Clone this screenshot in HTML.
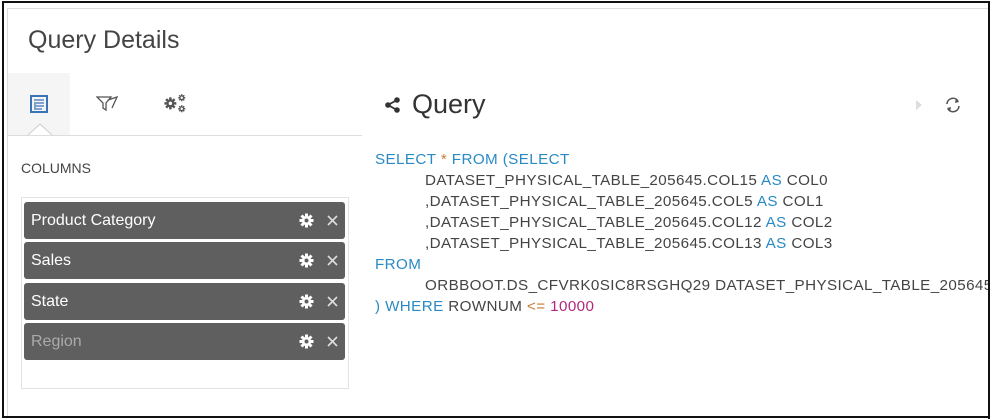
<!DOCTYPE html>
<html><head><meta charset="utf-8"><style>
*{margin:0;padding:0;box-sizing:border-box}
body{width:993px;height:420px;background:#fff;font-family:"Liberation Sans",sans-serif;position:relative;overflow:hidden}
.abs{position:absolute}
.pill{position:absolute;left:24px;width:321px;height:37px;background:#5f5f5f;border-radius:3px;color:#fff;font-size:16px;line-height:37px;padding-left:7px}
.pill svg.g{position:absolute;left:275px;top:11px}
.pill svg.x{position:absolute;left:303px;top:13px}
.sql{position:absolute;left:375px;top:148px;font-size:15.2px;letter-spacing:0.4px;line-height:21px;color:#444;white-space:pre}
.in{padding-left:50px}
.k{color:#2a8ac4}.o{color:#c0803a}.n{color:#b0287a}
</style></head><body>
<svg width="0" height="0" style="position:absolute"><defs>
<g id="gear"><circle cx="7.5" cy="7.5" r="4.6" fill="#fff"/><g stroke="#fff" stroke-width="3"><path d="M7.5 0.5v14M0.5 7.5h14M2.5 2.5l10 10M12.5 2.5l-10 10"/></g><circle cx="7.5" cy="7.5" r="2" fill="#5f5f5f"/></g>
</defs></svg>
<div class="abs" style="left:2px;top:1px;width:989px;height:417px;border:2px solid #111"></div>
<div class="abs" style="left:8px;top:8px;width:981px;height:1px;background:#ddd"></div>
<div class="abs" style="left:7px;top:8px;width:1px;height:408px;background:#ddd"></div>
<div class="abs" style="left:28px;top:26px;font-size:25px;color:#444">Query Details</div>
<div class="abs" style="left:8px;top:73px;width:62px;height:62px;background:#f5f5f5"></div>
<div class="abs" style="left:8px;top:135px;width:354px;height:1px;background:#ddd"></div>
<svg class="abs" style="left:28px;top:122px" width="24" height="14"><path d="M0 13 L12 2 L24 13" fill="#fff" stroke="#ccc"/></svg>
<svg class="abs" style="left:30px;top:95px" width="18" height="18"><rect x="1" y="1" width="16" height="16" fill="none" stroke="#3b73b9" stroke-width="2"/><path d="M4 5h10M6 8h8M6 11h8M6 14h6M5 7v8" stroke="#3b73b9" stroke-width="1.3"/></svg>
<svg class="abs" style="left:96px;top:96px" width="22" height="16"><path d="M1 1h14l-5 6v7l-3-2V7z M12 4l9-3-5 11" fill="none" stroke="#555" stroke-width="1.3"/></svg>
<svg class="abs" style="left:164px;top:94px" width="24" height="20">
<g transform="translate(0,3) scale(0.85)" ><circle cx="7.5" cy="7.5" r="4.6" fill="#555"/><g stroke="#555" stroke-width="3"><path d="M7.5 0.5v14M0.5 7.5h14M2.5 2.5l10 10M12.5 2.5l-10 10"/></g><circle cx="7.5" cy="7.5" r="2" fill="#fff"/></g>
<g transform="translate(14,0) scale(0.5)"><circle cx="7.5" cy="7.5" r="4.6" fill="#555"/><g stroke="#555" stroke-width="3"><path d="M7.5 0.5v14M0.5 7.5h14M2.5 2.5l10 10M12.5 2.5l-10 10"/></g><circle cx="7.5" cy="7.5" r="2.4" fill="#fff"/></g>
<g transform="translate(14,11) scale(0.5)"><circle cx="7.5" cy="7.5" r="4.6" fill="#555"/><g stroke="#555" stroke-width="3"><path d="M7.5 0.5v14M0.5 7.5h14M2.5 2.5l10 10M12.5 2.5l-10 10"/></g><circle cx="7.5" cy="7.5" r="2.4" fill="#fff"/></g>
</svg>
<div class="abs" style="left:21px;top:160px;font-size:14px;color:#444">COLUMNS</div>
<div class="abs" style="left:21px;top:197px;width:328px;height:192px;border:1px solid #e3e3e3"></div>
<div class="pill" style="top:202px">Product Category<svg class="g" width="15" height="15"><use href="#gear"/></svg><svg class="x" width="11" height="11"><path d="M1 1L10 10M10 1L1 10" stroke="#ddd" stroke-width="1.6"/></svg></div>
<div class="pill" style="top:242px">Sales<svg class="g" width="15" height="15"><use href="#gear"/></svg><svg class="x" width="11" height="11"><path d="M1 1L10 10M10 1L1 10" stroke="#ddd" stroke-width="1.6"/></svg></div>
<div class="pill" style="top:283px">State<svg class="g" width="15" height="15"><use href="#gear"/></svg><svg class="x" width="11" height="11"><path d="M1 1L10 10M10 1L1 10" stroke="#ddd" stroke-width="1.6"/></svg></div>
<div class="pill" style="top:323px;color:#aaa">Region<svg class="g" width="15" height="15"><use href="#gear"/></svg><svg class="x" width="11" height="11"><path d="M1 1L10 10M10 1L1 10" stroke="#ddd" stroke-width="1.6"/></svg></div>
<svg class="abs" style="left:384px;top:97px" width="18" height="16"><circle cx="13" cy="3" r="2.8" fill="#333"/><circle cx="4" cy="8" r="2.8" fill="#333"/><circle cx="13" cy="13" r="2.8" fill="#333"/><path d="M13 3L4 8L13 13" stroke="#333" stroke-width="1.8" fill="none"/></svg>
<div class="abs" style="left:412px;top:89px;font-size:27px;color:#333">Query</div>
<svg class="abs" style="left:915px;top:99px" width="8" height="12"><path d="M1 1L7 6L1 11z" fill="#ddd"/></svg>
<svg class="abs" style="left:944px;top:96px" width="18" height="18"><path d="M3 8A6 6 0 0 1 14 5M15 10A6 6 0 0 1 4 13" fill="none" stroke="#555" stroke-width="1.6"/><path d="M12 2l3 4-4 1zM6 16l-3-4 4-1z" fill="#555"/></svg>
<div class="sql" style="top:149px"><span class="k">SELECT</span> <span class="o">*</span> <span class="k">FROM (SELECT</span>
<span class="in">DATASET_PHYSICAL_TABLE_205645.COL15 <span class="k">AS</span> COL0</span>
<span class="in">,DATASET_PHYSICAL_TABLE_205645.COL5 <span class="k">AS</span> COL1</span>
<span class="in">,DATASET_PHYSICAL_TABLE_205645.COL12 <span class="k">AS</span> COL2</span>
<span class="in">,DATASET_PHYSICAL_TABLE_205645.COL13 <span class="k">AS</span> COL3</span>
<span class="k">FROM</span>
<span class="in">ORBBOOT.DS_CFVRK0SIC8RSGHQ29 DATASET_PHYSICAL_TABLE_205645</span>
<span class="k">) WHERE</span> ROWNUM <span class="o">&lt;=</span> <span class="n">10000</span></div>
<div class="abs" style="left:989px;top:0;width:4px;height:420px;background:#fff"></div>
<div class="abs" style="left:988px;top:1px;width:2px;height:418px;background:#111"></div>
</body></html>
